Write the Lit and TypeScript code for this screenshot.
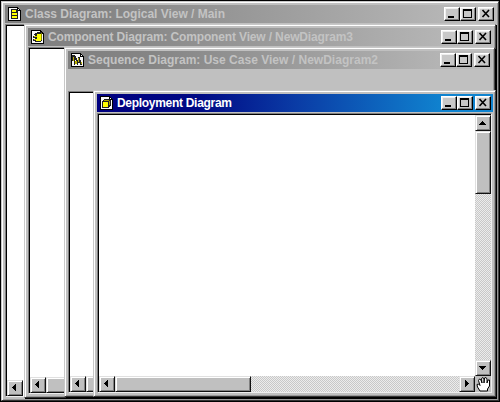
import { LitElement, html, css, svg } from "lit";
import { customElement, property } from "lit/decorators.js";

type Kind = "class" | "component" | "sequence" | "deployment";

const page = svg`<path d="M1 1H11V2H12V3H13V4H14V15H1Z" fill="#000"/><path d="M2 2H10V5H13V14H2Z" fill="#f8f8f8"/><path d="M11 3H12V4H11Z" fill="#fff"/>`;

const icons = {
  class: svg`${page}<path d="M4 3H10V4H11V13H4Z" fill="#222"/><path d="M5 4H9V6H5ZM5 7H10V9H5ZM5 10H10V12H5Z" fill="#ff0"/>`,
  component: svg`${page}<path d="M5 4H7V3H12V12H11V13H5V12H3V10H5V9H3V7H5V6H4V5H5Z" fill="#222"/><path d="M7 5H11V12H6V10H7Z" fill="#ff0"/><path d="M4 7H7V8H4ZM4 10H6V11H4Z" fill="#cc0"/><path d="M11 4H12V11H11Z" fill="#880"/>`,
  sequence: svg`${page}<path d="M2 3H5V4H6V6H7V8H8V5H10V8H11V11H12V13H10V11H8V13H7V10H6V8H5V13H4V9H2Z" fill="#222"/><path d="M3 5H4V9H3ZM5 9H7V12H5ZM8 6H9V10H8ZM11 10H12V12H11Z" fill="#bbb000"/>`,
  deployment: svg`${page}<path d="M3 6H4V5H5V4H11V5H12V11H11V12H10V13H3Z" fill="#222"/><path d="M4 7H9V12H4Z" fill="#ff0"/><path d="M5 5H10V6H5ZM10 6H11V10H10Z" fill="#aaa000"/>`,
};

const labelWidth = { class: 200, component: 305, sequence: 290, deployment: 115 };

@customElement("diagram-window")
class DiagramWindow extends LitElement {
  @property() label = "";
  @property() kind: Kind = "class";
  @property({ type: Boolean }) active = false;

  static styles = css`
    :host {
      box-sizing: border-box;
      display: flex;
      flex-direction: column;
      padding: 2px 2px 3px 2px;
      background: #c0c0c0;
      border: 1px solid #c8c8c8;
      border-right-color: #444;
      border-bottom-color: #333;
      box-shadow: inset 1px 1px #fff, inset -1px -1px #999;
      overflow: hidden;
      font: bold 12px "Liberation Sans", Arial, sans-serif;
    }
    .bar {
      height: 18px;
      flex: none;
      display: flex;
      align-items: center;
      margin: 1px 0 0 1px;
      padding: 0 2px;
      box-sizing: border-box;
      background: linear-gradient(90deg, #808080, #858585 20%, #a0a0a0 60%, #bdbdbd);
      color: #c3c3c3;
    }
    .bar.active {
      background: linear-gradient(90deg, #000080, #000984 25%, #0a3ba5 50%, #1084d0 88%);
      color: #fff;
    }
    .icon { width: 15px; height: 16px; flex: none; }
    .name { margin-left: 3px; flex: 1; }
    .name svg { display: block; overflow: visible; }
    .name text { fill: currentColor; }
    .button {
      box-sizing: border-box;
      width: 16px;
      height: 14px;
      flex: none;
      background: #c8c8c8;
      border: 1px solid #fff;
      border-right-color: #000;
      border-bottom-color: #000;
      box-shadow: inset -1px -1px #808080, inset 1px 1px #eee;
    }
    .button.close { margin-left: 2px; }
    .button svg { display: block; }
    .spacer { flex: none; height: var(--spacer, 0px); }
    .view {
      flex: 1;
      min-height: 0;
      margin: 1px 1px 0 1px;
      padding: 1px 0 0 1px;
      display: grid;
      grid-template-columns: 1fr 16px;
      grid-template-rows: 1fr 16px;
      border: 1px solid #808080;
      border-right-color: #eee;
      border-bottom-color: #eee;
      box-shadow: inset 1px 1px #000;
      background: #fff;
    }
    .track {
      display: flex;
      min-width: 0;
      min-height: 0;
      background: repeating-conic-gradient(#c8c8c8 0 25%, #ececec 0 50%) 0 0 / 2px 2px;
    }
    .track.empty { background: #fff; }
    .track.vertical { flex-direction: column; }
    .arrow, .thumb {
      box-sizing: border-box;
      flex: none;
      background: #c0c0c0;
      border: 1px solid #e0e0e0;
      border-right-color: #111;
      border-bottom-color: #111;
      box-shadow: inset 1px 1px #fff, inset -1px -1px #808080;
    }
    .arrow { width: 16px; height: 16px; }
    .arrow svg { display: block; }
    .end { margin-left: auto; }
    .vertical .end { margin-left: 0; margin-top: auto; }
    .horizontal .thumb { width: 136px; height: 16px; }
    .vertical .thumb { width: 16px; height: 63px; }
    .corner { background: #c0c0c0; }
  `;

  private arrow(d: string, end = false) {
    return html`<div class="arrow ${end ? "end" : ""}">
      <svg width="14" height="14" shape-rendering="crispEdges"><path d=${d} /></svg>
    </div>`;
  }

  render() {
    const width = labelWidth[this.kind];
    return html`
      <div class="bar ${this.active ? "active" : ""}">
        <svg class="icon" viewBox="0 0 15 16" shape-rendering="crispEdges">${icons[this.kind]}</svg>
        <div class="name">
          <svg width=${width} height="16">
            <text x="0" y="12" textLength=${width}>${this.label}</text>
          </svg>
        </div>
        <div class="button"><svg width="14" height="12"><path d="M3 8H9V10H3Z" /></svg></div>
        <div class="button">
          <svg width="14" height="12"><path d="M2 1H11V10H2ZM3 3V9H10V3Z" fill-rule="evenodd" /></svg>
        </div>
        <div class="button close">
          <svg width="14" height="12"><path d="M3.5 2L10 9M10 2L3.5 9" stroke="#000" stroke-width="1.6" /></svg>
        </div>
      </div>
      <div class="spacer"></div>
      <div class="view">
        <div></div>
        <div class="track vertical">
          ${this.arrow("M6 5H7V6H8V7H9V8H10V9H3V8H4V7H5V6H6Z")}
          <div class="thumb"></div>
          ${this.arrow("M3 5H10V6H9V7H8V8H7V9H6V8H5V7H4V6H3Z", true)}
        </div>
        <div class="track horizontal ${this.kind === "class" ? "empty" : ""}">
          ${this.arrow("M8 3V10H7V9H6V8H5V7H4V6H5V5H6V4H7V3Z")}
          ${this.kind === "class" ? "" : html`<div class="thumb"></div>`}
          ${this.arrow("M5 3V10H6V9H7V8H8V7H9V6H8V5H7V4H6V3Z", true)}
        </div>
        <div class="corner"></div>
      </div>
    `;
  }
}

@customElement("app-root")
class AppRoot extends LitElement {
  static styles = css`
    :host {
      display: block;
      position: relative;
      width: 500px;
      height: 402px;
      overflow: hidden;
      background: #000;
    }
    diagram-window { position: absolute; }
    .logical { left: 1px; top: 1px; width: 498px; height: 400px; }
    .component { left: 24px; top: 24px; width: 472px; height: 374px; }
    .sequence { left: 64px; top: 47px; width: 431px; height: 350px; --spacer: 21px; }
    .deployment { left: 93px; top: 90px; width: 403px; height: 307px; }
    .shade { position: absolute; background: #000; }
    .shade.outer { left: 25px; top: 25px; width: 472px; height: 374px; }
    .shade.inner { left: 66px; top: 49px; width: 431px; height: 349px; }
    .hand { position: absolute; left: 476px; top: 376px; }
  `;

  render() {
    return html`
      <diagram-window class="logical" kind="class" label="Class Diagram: Logical View / Main"></diagram-window>
      <div class="shade outer"></div>
      <diagram-window class="component" kind="component" label="Component Diagram: Component View / NewDiagram3"></diagram-window>
      <div class="shade inner"></div>
      <diagram-window class="sequence" kind="sequence" label="Sequence Diagram: Use Case View / NewDiagram2"></diagram-window>
      <diagram-window class="deployment" kind="deployment" label="Deployment Diagram" active></diagram-window>
      <svg class="hand" width="16" height="17" viewBox="0 0 16 17">
        <path
          d="M4 15L1.5 11L1 8.5L2.5 8L4 9.5L2.5 4.5L3.5 3L5 4L6 7L5.5 2.5L7 1.5L8 3V7L8.5 2L10 1.5L11 3V7L12 4L13.5 4V10L11.5 13V15Z"
          fill="#fff" stroke="#000" stroke-linejoin="round" />
      </svg>
    `;
  }
}
